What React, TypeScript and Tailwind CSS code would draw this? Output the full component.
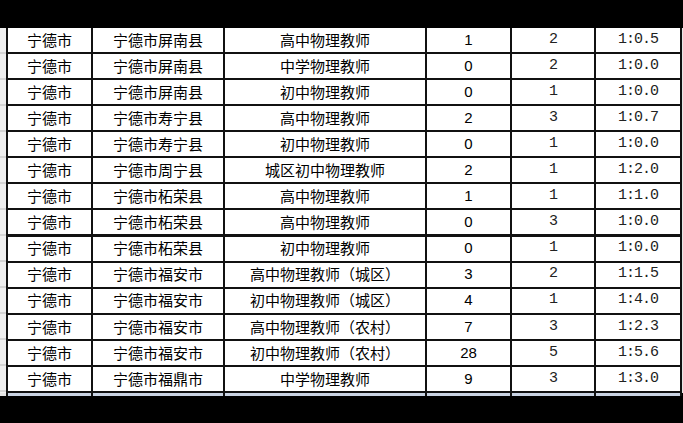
const rows: [string, string, string, string, string, string][] = [
  ['宁德市', '宁德市屏南县', '高中物理教师', '1', '2', '1:0.5'],
  ['宁德市', '宁德市屏南县', '中学物理教师', '0', '2', '1:0.0'],
  ['宁德市', '宁德市屏南县', '初中物理教师', '0', '1', '1:0.0'],
  ['宁德市', '宁德市寿宁县', '高中物理教师', '2', '3', '1:0.7'],
  ['宁德市', '宁德市寿宁县', '初中物理教师', '0', '1', '1:0.0'],
  ['宁德市', '宁德市周宁县', '城区初中物理教师', '2', '1', '1:2.0'],
  ['宁德市', '宁德市柘荣县', '高中物理教师', '1', '1', '1:1.0'],
  ['宁德市', '宁德市柘荣县', '高中物理教师', '0', '3', '1:0.0'],
  ['宁德市', '宁德市柘荣县', '初中物理教师', '0', '1', '1:0.0'],
  ['宁德市', '宁德市福安市', '高中物理教师（城区）', '3', '2', '1:1.5'],
  ['宁德市', '宁德市福安市', '初中物理教师（城区）', '4', '1', '1:4.0'],
  ['宁德市', '宁德市福安市', '高中物理教师（农村）', '7', '3', '1:2.3'],
  ['宁德市', '宁德市福安市', '初中物理教师（农村）', '28', '5', '1:5.6'],
  ['宁德市', '宁德市福鼎市', '中学物理教师', '9', '3', '1:3.0'],
];

const cjk = "font-['Noto_Sans_CJK_SC',sans-serif] text-[15px]";
const mono = "font-['Liberation_Mono','Noto_Sans_CJK_SC',monospace] text-[15px] tracking-[-1px] text-[#222]";
const arial = "font-['Liberation_Sans',Arial,sans-serif] text-[15px]";

export default function App() {
  return (
    <div className="flex h-[423px] w-[683px] flex-col overflow-hidden bg-black">
      <div className="h-[28px] shrink-0 bg-black" />
      <div className="flex shrink-0 bg-[#f4f4f4]">
        <div className="flex w-[6px] shrink-0 flex-col gap-[2px] bg-[#d4d4d4]">
          {rows.map((_, i) => (
            <div key={i} className="h-[24px] bg-[#efefef]" />
          ))}
          <div className="h-[1px] bg-[#efefef]" />
        </div>
        <div className="grid w-[676px] shrink-0 grid-cols-[83px_130px_200px_83px_82px_84px] gap-x-[2px] gap-y-[2px] border-x-2 border-b-2 border-[#111] bg-[#111] text-black">
          {rows.map((r, i) => (
            <div key={i} className="contents">
              <div className={`flex h-[24px] items-center justify-center bg-white ${cjk}`}>{r[0]}</div>
              <div className={`flex h-[24px] items-center justify-center bg-white ${cjk}`}>{r[1]}</div>
              <div className={`flex h-[24px] items-center justify-center bg-white ${cjk}`}>{r[2]}</div>
              <div className={`flex h-[24px] items-center justify-center bg-white ${arial}`}>{r[3]}</div>
              <div className={`flex h-[24px] items-center justify-center bg-white ${mono}`}>{r[4]}</div>
              <div className={`flex h-[24px] items-center justify-center bg-white ${mono}`}>{r[5]}</div>
            </div>
          ))}
        </div>
        <div className="w-[1px] shrink-0 bg-[#e6e6e6]" />
      </div>
      <div className="flex h-[3px] shrink-0">
        <div className="w-[6px] bg-[#e4e4e4]" />
        <div className="grid w-[676px] grid-cols-[83px_130px_200px_83px_82px_84px] gap-x-[2px] border-x-2 border-[#111] bg-[#111]">
          <div className="bg-[#c9d3e3]" />
          <div className="bg-[#c9d3e3]" />
          <div className="bg-[#c9d3e3]" />
          <div className="bg-[#c9d3e3]" />
          <div className="bg-[#c9d3e3]" />
          <div className="bg-[#c9d3e3]" />
        </div>
      </div>
      <div className="flex-1 bg-black" />
    </div>
  );
}
